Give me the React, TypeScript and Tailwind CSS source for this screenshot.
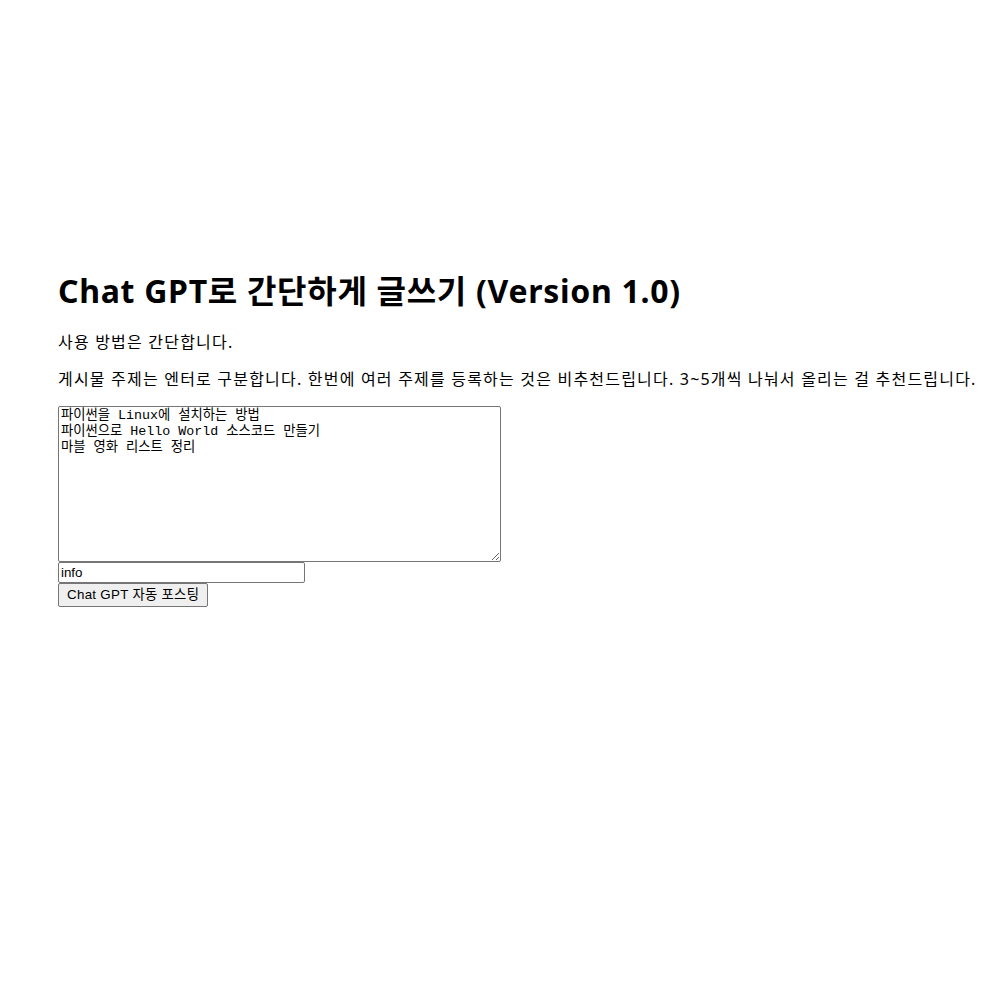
const topics = `파이썬을 Linux에 설치하는 방법
파이썬으로 Hello World 소스코드 만들기
마블 영화 리스트 정리`;

const App = () => {
    return <div className="min-h-screen bg-white text-black pl-[58px] pt-[271px] font-['Noto_Sans','Noto_Sans_CJK_KR',sans-serif]">
        <h1 className="text-[32px] leading-[40px] font-bold mb-[20px] tracking-[0.7px] whitespace-nowrap">Chat GPT로 간단하게 글쓰기 (Version 1.0)</h1>

        {/* How-to notes */}
        <p className="text-[16px] leading-[22px] tracking-[1.2px]">사용 방법은 간단합니다.</p>
        <p className="text-[16px] leading-[22px] tracking-[1.2px] mt-[15px] whitespace-nowrap">게시물 주제는 엔터로 구분합니다. 한번에 여러 주제를 등록하는 것은 비추천드립니다. 3~5개씩 나눠서 올리는 걸 추천드립니다.</p>

        {/* Posting form */}
        <form className="mt-[16px] flex flex-col items-start" onSubmit={e => e.preventDefault()}>
            <textarea defaultValue={topics}
                className="block w-[443px] h-[156px] border border-[#767676] rounded-[2px] px-[2px] py-[1px] text-[13.33px] leading-[16px] font-['Liberation_Mono','Noto_Sans_CJK_KR',monospace] resize-y outline-none" />
            <input defaultValue="info"
                className="block w-[247px] h-[21px] border border-[#767676] rounded-[2px] px-[2px] text-[13.33px] font-['Liberation_Sans',sans-serif] outline-none" />
            <button type="submit"
                className="h-[24px] px-[8px] border border-[#767676] rounded-[2px] bg-[#efefef] text-[13.33px] tracking-[0.3px] font-['Liberation_Sans','Noto_Sans_CJK_KR',sans-serif]">
                Chat GPT 자동 포스팅
            </button>
        </form>
    </div>
}

export default App
